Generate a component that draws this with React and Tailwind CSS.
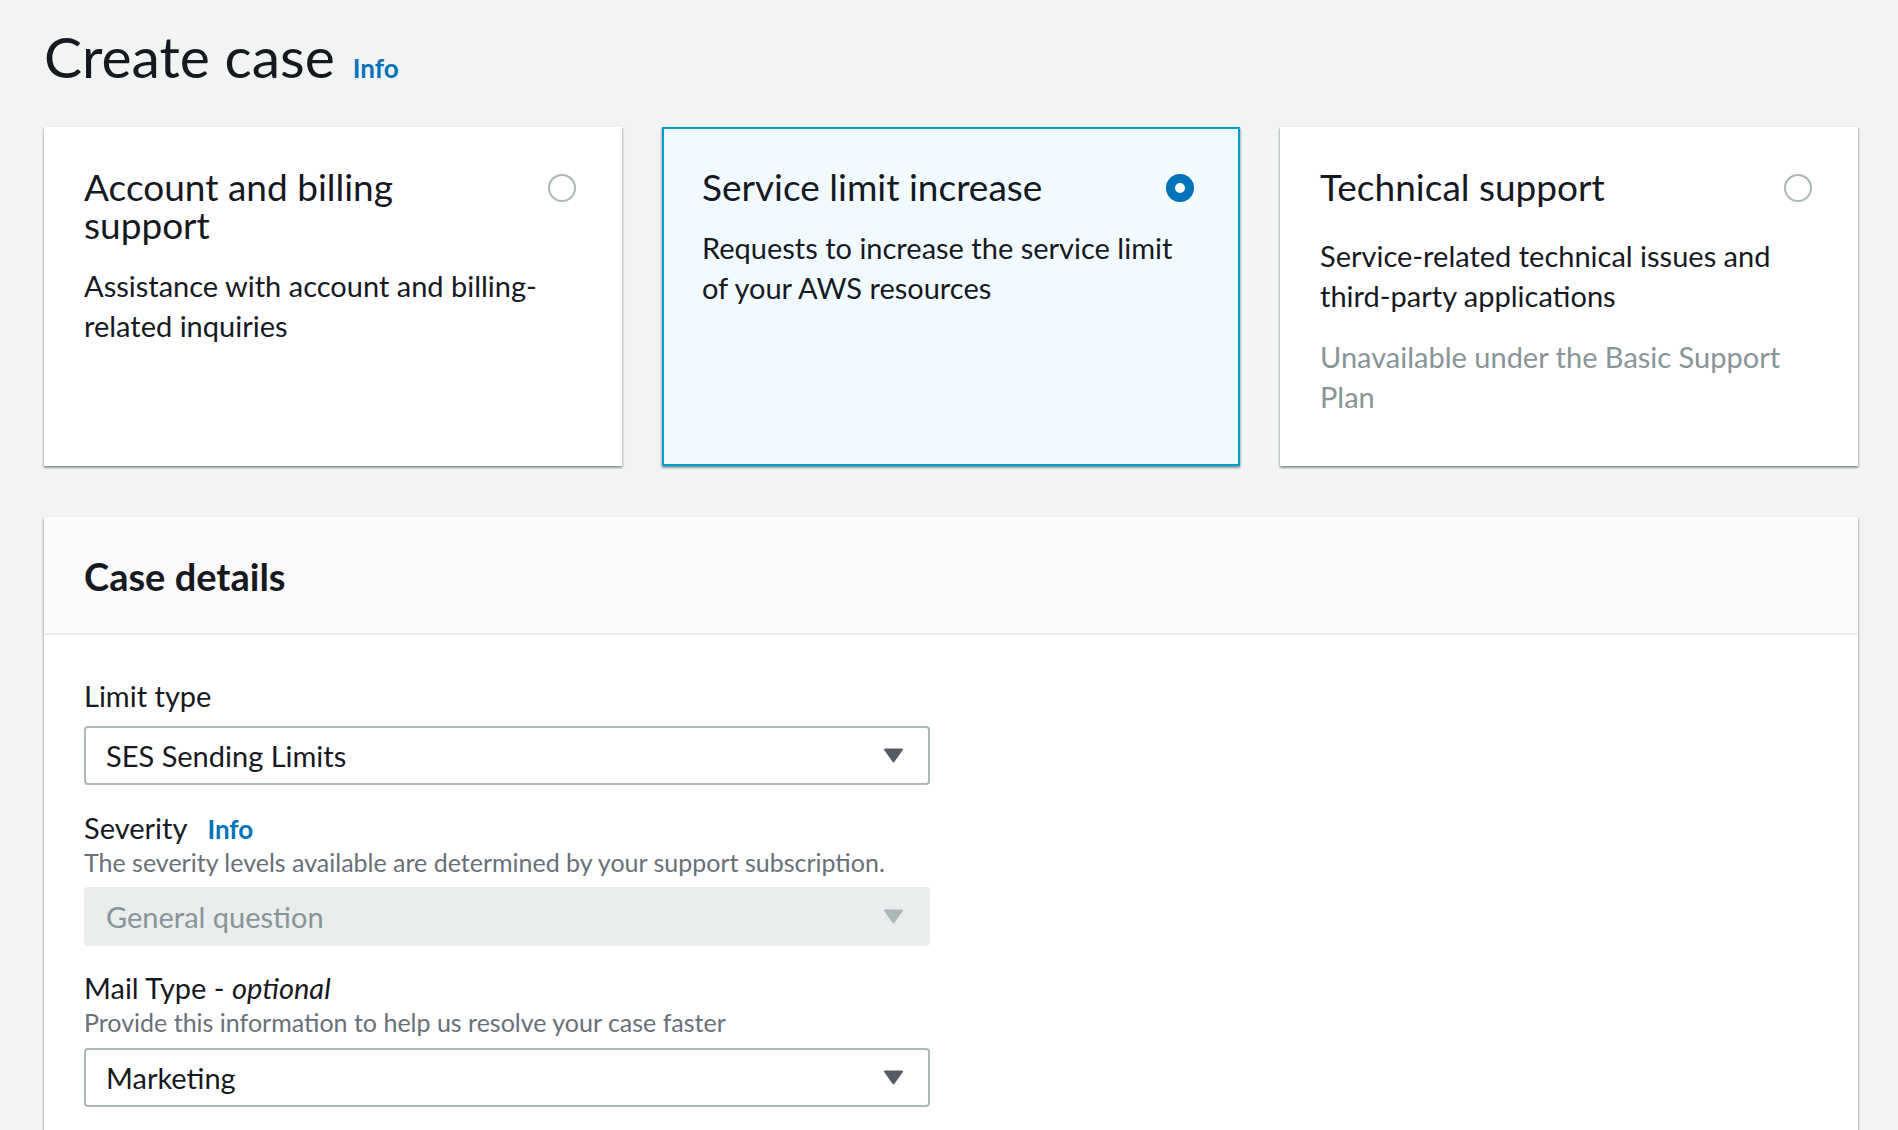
import React from 'react'

const Caret = ({ color }) => (
  <svg width="21" height="15" viewBox="0 0 21 15" className="shrink-0">
    <path d="M2 1.5h17l-8.5 12z" fill={color} stroke={color} strokeWidth="2" strokeLinejoin="round" />
  </svg>
)

const Radio = ({ checked }) =>
  checked ? (
    <span className="mt-[6px] block h-[28px] w-[28px] shrink-0 rounded-full border-[9px] border-[#0073bb] bg-white" />
  ) : (
    <span className="mt-[6px] block h-[28px] w-[28px] shrink-0 rounded-full border-2 border-[#aab7b8] bg-white" />
  )

const tiles = [
  {
    title: 'Account and billing support',
    desc: 'Assistance with account and billing-related inquiries',
  },
  {
    title: 'Service limit increase',
    desc: 'Requests to increase the service limit of your AWS resources',
    selected: true,
  },
  {
    title: 'Technical support',
    desc: 'Service-related technical issues and third-party applications',
    note: 'Unavailable under the Basic Support Plan',
  },
]

const Tile = ({ tile }) => (
  <div
    className={
      tile.selected
        ? 'h-[339px] border-2 border-[#00a1c9] bg-[#f1faff] pt-[39px] pl-[38px] pr-[44px] shadow-[0_2px_2px_0_rgba(0,28,36,0.3),1px_1px_2px_0_rgba(0,28,36,0.15),-1px_1px_2px_0_rgba(0,28,36,0.15)]'
        : 'h-[339px] border-2 border-transparent bg-white pt-[39px] pl-[38px] pr-[44px] shadow-[0_2px_2px_0_rgba(0,28,36,0.3),1px_1px_2px_0_rgba(0,28,36,0.15),-1px_1px_2px_0_rgba(0,28,36,0.15)]'
    }
  >
    <div className="flex items-start justify-between">
      <h2 className="max-w-[400px] text-[37px] leading-[38px] font-normal">{tile.title}</h2>
      <Radio checked={tile.selected} />
    </div>
    <p className={tile.note ? 'mt-[30px] max-w-[480px] text-[29px] leading-[40px]' : 'mt-[22px] max-w-[480px] text-[29px] leading-[40px]'}>
      {tile.desc}
    </p>
    {tile.note && <p className="mt-[21px] max-w-[480px] text-[29px] leading-[40px] text-[#879596]">{tile.note}</p>}
  </div>
)

const Select = ({ value, disabled }) => (
  <div
    className={
      disabled
        ? 'flex h-[59px] w-[846px] items-center justify-between rounded-[4px] border-2 border-[#eaeded] bg-[#eaeded] pl-[20px] pr-[24px] text-[29px] leading-[34px] text-[#879596]'
        : 'flex h-[59px] w-[846px] items-center justify-between rounded-[4px] border-2 border-[#aab7b8] bg-white pl-[20px] pr-[24px] text-[29px] leading-[34px] text-[#16191f]'
    }
  >
    <span>{value}</span>
    <Caret color={disabled ? '#aab7b8' : '#545b64'} />
  </div>
)

export default function App() {
  return (
    <div className="min-h-screen bg-[#f2f3f3] pl-[44px] pr-[40px] pt-[24px] font-[Lato,sans-serif] text-[#16191f]">
      <div className="flex items-baseline gap-[18px]">
        <h1 className="text-[57px] leading-[64px] font-normal">Create case</h1>
        <a className="text-[26px] leading-[30px] font-bold text-[#0073bb]">Info</a>
      </div>

      <div className="mt-[39px] grid grid-cols-3 gap-[40px]">
        {tiles.map((t) => (
          <Tile key={t.title} tile={t} />
        ))}
      </div>

      <div className="mt-[51px] bg-white shadow-[0_2px_2px_0_rgba(0,28,36,0.3),1px_1px_2px_0_rgba(0,28,36,0.15),-1px_1px_2px_0_rgba(0,28,36,0.15)]">
        <div className="border-b-2 border-[#eaeded] bg-[#fafafa] px-[40px] pt-[39px] pb-[37px]">
          <h2 className="text-[38px] leading-[40px] font-bold">Case details</h2>
        </div>
        <div className="px-[40px] pt-[44px] pb-[40px]">
          <label className="block text-[29px] leading-[34px]">Limit type</label>
          <div className="mt-[13px]">
            <Select value="SES Sending Limits" />
          </div>

          <div className="mt-[26px] flex items-baseline gap-[20px]">
            <span className="text-[29px] leading-[34px]">Severity</span>
            <a className="text-[26px] leading-[30px] font-bold text-[#0073bb]">Info</a>
          </div>
          <p className="mt-[1px] text-[25px] leading-[32px] text-[#687078]">
            The severity levels available are determined by your support subscription.
          </p>
          <div className="mt-[9px]">
            <Select value="General question" disabled />
          </div>

          <div className="mt-[25px] text-[29px] leading-[34px]">
            Mail Type - <i>optional</i>
          </div>
          <p className="mt-[1px] text-[25px] leading-[32px] text-[#687078]">
            Provide this information to help us resolve your case faster
          </p>
          <div className="mt-[10px]">
            <Select value="Marketing" />
          </div>
        </div>
      </div>
    </div>
  )
}
